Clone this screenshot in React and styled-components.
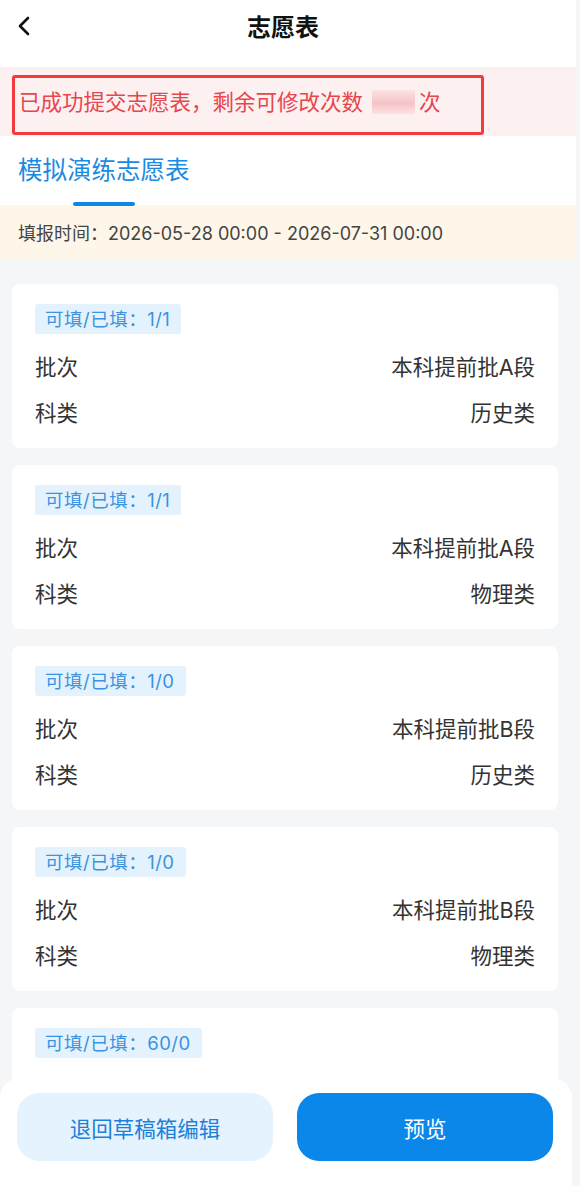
import styled, { createGlobalStyle } from 'styled-components';

const GlobalStyle = createGlobalStyle`
    body {
        margin: 0;
        background: #f5f6f8;
        font-family: Inter, "Noto Sans CJK SC", sans-serif;
    }
`

const cards = [
    { quota: '1/1', batch: '本科提前批A段', subject: '历史类' },
    { quota: '1/1', batch: '本科提前批A段', subject: '物理类' },
    { quota: '1/0', batch: '本科提前批B段', subject: '历史类' },
    { quota: '1/0', batch: '本科提前批B段', subject: '物理类' },
    { quota: '60/0', batch: '本科批', subject: '历史类' },
];

export default function App(){
    return(
        <>
            <GlobalStyle />
            <Page>
                <Header>
                    <Back>
                        <svg width="14" height="20" viewBox="0 0 14 20">
                            <polyline points="11,2 3,10 11,18" fill="none" stroke="#111" strokeWidth="2.6" strokeLinecap="round" strokeLinejoin="round" />
                        </svg>
                    </Back>
                    <Title>志愿表</Title>
                </Header>
                <Banner>
                    <Notice>
                        已成功提交志愿表，剩余可修改次数<Blur />次
                    </Notice>
                </Banner>
                <Tabs>
                    <Tab>
                        模拟演练志愿表
                        <Underline />
                    </Tab>
                </Tabs>
                <Info>填报时间：2026-05-28 00:00 - 2026-07-31 00:00</Info>
                <List>
                    {cards.map((c, i) => (
                        <Card key={i}>
                            <Badge>可填/已填：{c.quota}</Badge>
                            <Row>
                                <span>批次</span>
                                <span>{c.batch}</span>
                            </Row>
                            <Row>
                                <span>科类</span>
                                <span>{c.subject}</span>
                            </Row>
                        </Card>
                    ))}
                </List>
                <Footer>
                    <Button>退回草稿箱编辑</Button>
                    <Button primary>预览</Button>
                </Footer>
            </Page>
        </>
    )
}

const Page = styled.div`
    width: 576px;
    min-height: 1186px;
    padding-bottom: 120px;
`
const Header = styled.div`
    position: relative;
    height: 68px;
    background: #ffffff;
    border-bottom: 1px solid #f3f3f3;
    box-sizing: border-box;
    display: flex;
    justify-content: center;
    padding: 11px 10px 0 0;
`
const Back = styled.div`
    position: absolute;
    left: 17px;
    top: 16px;
`
const Title = styled.h1`
    margin: 0;
    font-size: 24px;
    line-height: 34px;
    font-weight: 700;
    color: #111111;
`
const Banner = styled.div`
    background: #fdf0f0;
    padding: 7px 0 1px 12px;
`
const Notice = styled.div`
    width: 472px;
    box-sizing: border-box;
    border: 3px solid #f23b3f;
    border-radius: 3px;
    padding: 9px 0 15px 4px;
    display: flex;
    align-items: center;
    font-size: 21.5px;
    line-height: 30px;
    color: #e6464c;
`
const Blur = styled.span`
    display: inline-block;
    width: 43px;
    height: 24px;
    margin: 0 4px 0 9px;
    background: linear-gradient(180deg, #fbe3e4 0%, #f5c3c5 55%, #fbe3e4 100%);
`
const Tabs = styled.div`
    background: #ffffff;
    padding: 18px 0 0 18px;
    height: 69px;
    box-sizing: border-box;
`
const Tab = styled.div`
    display: inline-flex;
    flex-direction: column;
    align-items: center;
    font-size: 24.5px;
    line-height: 32px;
    color: #1b8ae0;
`
const Underline = styled.div`
    width: 62px;
    height: 4px;
    border-radius: 2px;
    background: #0a87e9;
    margin-top: 16px;
`
const Info = styled.div`
    background: #fdf6e9;
    height: 54px;
    padding-left: 18px;
    display: flex;
    align-items: center;
    font-size: 18px;
    color: #444444;
`
const List = styled.div`
    display: flex;
    flex-direction: column;
    gap: 17px;
    padding: 25px 18px 0 12px;
`
const Card = styled.div`
    background: #ffffff;
    border-radius: 8px;
    padding: 20px 23px 14px;
    display: flex;
    flex-direction: column;
`
const Badge = styled.div`
    align-self: flex-start;
    height: 30px;
    line-height: 30px;
    padding: 0 11px 0 10px;
    border-radius: 3px;
    background: #e4f2fd;
    color: #3b93e2;
    font-size: 18.5px;
    letter-spacing: 0.5px;
    margin-bottom: 8px;
`
const Row = styled.div`
    height: 46px;
    display: flex;
    align-items: center;
    justify-content: space-between;
    font-size: 21.5px;
    color: #333333;
`
const Footer = styled.div`
    position: fixed;
    left: 0;
    bottom: 0;
    width: 572px;
    height: 108px;
    box-sizing: border-box;
    background: #ffffff;
    border-radius: 20px 20px 0 0;
    padding: 15px 0 0 17px;
    display: grid;
    grid-template-columns: 256px 256px;
    grid-template-rows: 68px;
    column-gap: 24px;
`
const Button = styled.button`
    border: none;
    border-radius: 22px;
    background: ${props => props.primary ? '#0a87e9' : '#e4f3fd'};
    color: ${props => props.primary ? '#ffffff' : '#1f80d8'};
    font-family: Inter, "Noto Sans CJK SC", sans-serif;
    font-size: 21.5px;
`
